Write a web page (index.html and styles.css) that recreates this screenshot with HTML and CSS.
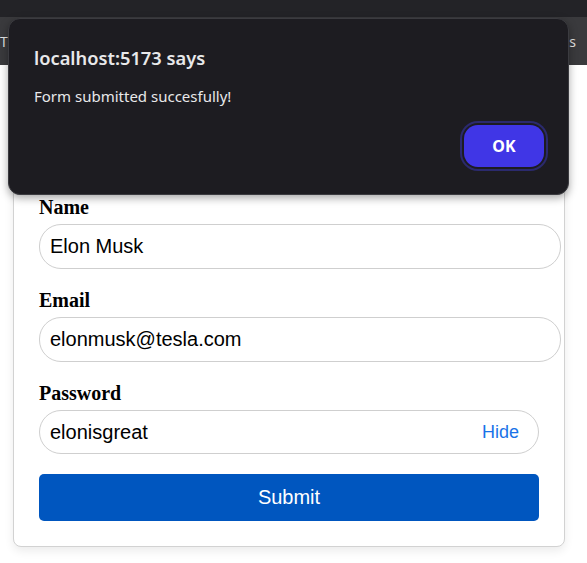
FILE: index.html
```html
<!DOCTYPE html>
<html>
<head>
<meta charset="utf-8">
<link rel="stylesheet" href="styles.css">
</head>
<body>
<div class="chrome">
  <div class="tabstrip"></div>
  <div class="toolbar"><span class="tb-left">T</span><span class="tb-right">s</span></div>
</div>
<main class="page">
  <form class="card">
    <div class="group">
      <label class="label">Name</label>
      <input class="input" type="text" value="Elon Musk">
    </div>
    <div class="group">
      <label class="label">Email</label>
      <input class="input" type="text" value="elonmusk@tesla.com">
    </div>
    <div class="group">
      <label class="label">Password</label>
      <div class="pw">
        <span class="pw-value">elonisgreat</span>
        <span class="pw-toggle">Hide</span>
      </div>
    </div>
    <button type="button" class="submit">Submit</button>
  </form>
</main>
<div class="dialog">
  <div class="dlg-title">localhost:5173 says</div>
  <div class="dlg-msg">Form submitted succesfully!</div>
  <div class="dlg-actions"><button type="button" class="ok">OK</button></div>
</div>
</body>
</html>
```
FILE: styles.css
```css
html, body { margin: 0; padding: 0; background: #fff; }
body { width: 587px; height: 563px; overflow: hidden; position: relative; }

.chrome { display: flex; flex-direction: column; }
.tabstrip { height: 17px; background: #232327; }
.toolbar {
  height: 48px; background: #3a3a3d; display: flex; justify-content: space-between;
  align-items: center; color: #e6e6e6; font-family: "Open Sans", sans-serif; font-size: 14px;
}
.tb-left { margin-left: 0; }
.tb-right { margin-right: 11px; }

.page { padding-top: 105px; padding-left: 13px; }
.card {
  width: 500px; padding: 25px; border: 1px solid #d2d2d2; border-radius: 8px;
  box-shadow: 0 4px 10px rgba(0,0,0,0.08); background: #fff;
  font-family: "Liberation Serif", serif;
}
.group { margin-bottom: 20px; }
.label { display: block; font-weight: bold; font-size: 20px; line-height: 23px; margin-bottom: 5px; color: #000; }
.input {
  display: block; width: 100%; box-sizing: content-box; padding: 10px; border: 1px solid #cfcfcf;
  border-radius: 22px; font-family: "Liberation Sans", Arial, sans-serif; font-size: 20px; line-height: 23px;
  color: #000; background: #fff; margin: 0; outline: none;
}
.pw {
  display: flex; align-items: center; justify-content: space-between; box-sizing: border-box;
  width: 500px; height: 44px; padding: 0 19px 0 10px; border: 1px solid #cfcfcf; border-radius: 22px;
  font-family: "Liberation Sans", Arial, sans-serif;
}
.pw-value { font-size: 20px; color: #000; }
.pw-toggle { font-size: 18px; color: #1a73e8; }
.submit {
  display: block; width: 500px; height: 47px; border: none; border-radius: 5px; background: #0056bf;
  color: #fff; font-family: "Liberation Sans", Arial, sans-serif; font-size: 20px; margin: 0; padding: 0;
}

.dialog {
  position: absolute; left: 8px; top: 18px; width: 561px; height: 177px; box-sizing: border-box;
  background: #1d1c21; border: 1px solid #3b3b40; border-radius: 12px;
  box-shadow: 0 3px 8px rgba(0,0,0,0.35);
  padding: 26px 24px 0 25px; color: #e8e8ea; font-family: "Noto Sans", "Open Sans", sans-serif;
  display: flex; flex-direction: column;
}
.dlg-title { font-size: 18.3px; font-weight: 600; line-height: 26px; }
.dlg-msg { font-size: 15px; line-height: 20px; margin-top: 15px; }
.dlg-actions { display: flex; justify-content: flex-end; margin-top: 19px; }
.ok {
  width: 80px; height: 42px; border-radius: 14px; border: none; background: #4036e6; color: #fff;
  font-family: "Noto Sans", "Open Sans", sans-serif; font-weight: 700; font-size: 16px;
  box-shadow: 0 0 0 2px #1d1c21, 0 0 0 4px #2b2a6e; padding: 0;
}
```
